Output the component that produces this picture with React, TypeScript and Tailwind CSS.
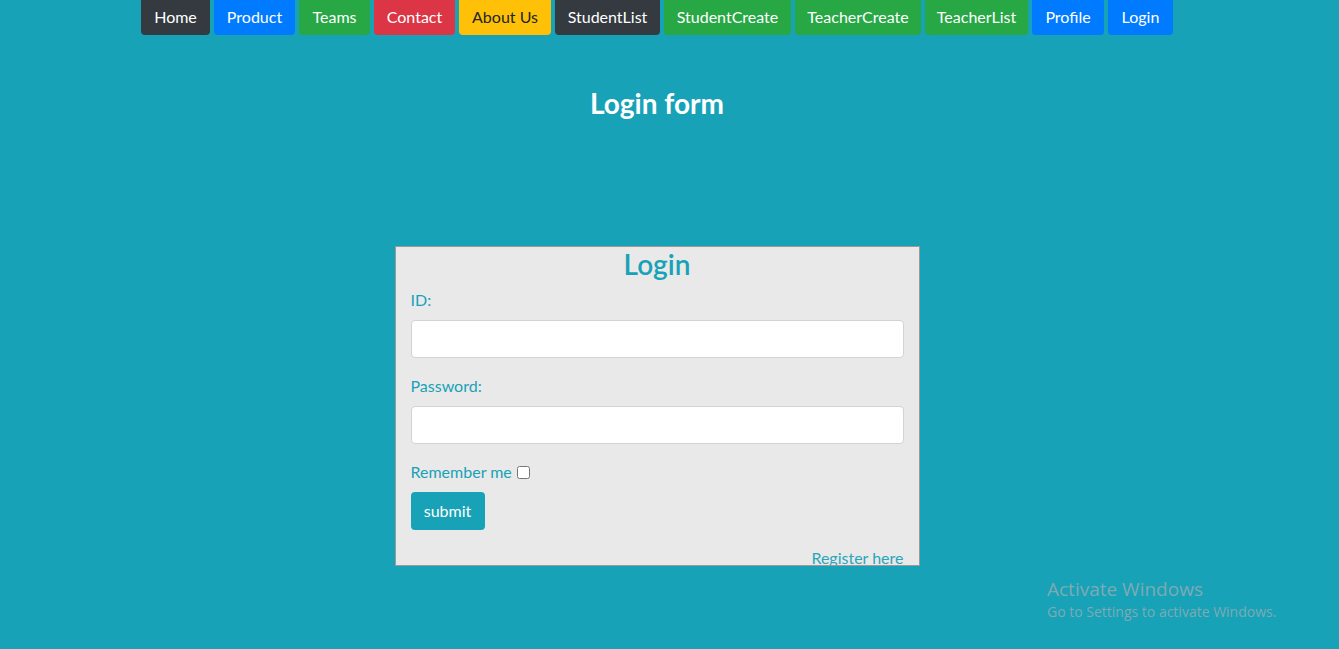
import React from "react";

const navItems: { label: string; cls: string }[] = [
  { label: "Home", cls: "w-[69px] bg-[#343a40] text-white" },
  { label: "Product", cls: "w-[81px] bg-[#007bff] text-white" },
  { label: "Teams", cls: "w-[71px] bg-[#28a745] text-white" },
  { label: "Contact", cls: "w-[81px] bg-[#dc3545] text-white" },
  { label: "About Us", cls: "w-[92px] bg-[#ffc107] text-[#212529]" },
  { label: "StudentList", cls: "w-[105px] bg-[#343a40] text-white" },
  { label: "StudentCreate", cls: "w-[127px] bg-[#28a745] text-white" },
  { label: "TeacherCreate", cls: "w-[126px] bg-[#28a745] text-white" },
  { label: "TeacherList", cls: "w-[103px] bg-[#28a745] text-white" },
  { label: "Profile", cls: "w-[72px] bg-[#007bff] text-white" },
  { label: "Login", cls: "w-[65px] bg-[#007bff] text-white" },
];

export default function App() {
  return (
    <div
      className="relative min-h-[649px] w-full overflow-hidden bg-[#17a2b8]"
      style={{ fontFamily: "Lato, 'Open Sans', sans-serif" }}
    >
      <div className="w-[1314px]">
        <nav className="flex justify-center gap-[4px]">
          {navItems.map((n) => (
            <button
              key={n.label}
              className={`${n.cls} flex h-[35px] items-center justify-center rounded-b-[4px] pb-[1px] text-[16px] leading-6`}
            >
              {n.label}
            </button>
          ))}
        </nav>
        <h3 className="mt-[51px] text-center text-[28px] font-bold leading-[34px] text-white">
          Login form
        </h3>
        <div className="mt-[126px] flex justify-center">
          <div className="h-[320px] w-[525px] overflow-hidden border border-[#9a9a9a] bg-[#e9e9e9] px-[15px]">
            <h2 className="text-center text-[28px] font-semibold leading-[34px] text-[#17a2b8]">
              Login
            </h2>
            <div className="mt-[7px]">
              <label className="block text-[16px] leading-6 text-[#17a2b8]">ID:</label>
              <input
                type="text"
                className="mt-[8px] block h-[38px] w-full rounded-[4px] border border-[#ced4da] bg-white px-3"
              />
            </div>
            <div className="mt-[16px]">
              <label className="block text-[16px] leading-6 text-[#17a2b8]">Password:</label>
              <input
                type="password"
                className="mt-[8px] block h-[38px] w-full rounded-[4px] border border-[#ced4da] bg-white px-3"
              />
            </div>
            <div className="mt-[16px] flex items-center text-[16px] leading-6 text-[#17a2b8]">
              <span>Remember me</span>
              <input type="checkbox" className="ml-[5px] h-[13px] w-[13px]" />
            </div>
            <button className="mt-[8px] h-[38px] w-[74px] rounded-[4px] bg-[#17a2b8] text-[16px] text-white">
              submit
            </button>
            <div className="mt-[16px] text-right text-[16px] leading-6 text-[#2aa6bb]">
              Register here
            </div>
          </div>
        </div>
      </div>
      <div
        className="absolute left-[1047px] top-[577px] text-[#7eaab3]"
        style={{ fontFamily: "'Open Sans', sans-serif" }}
      >
        <div className="text-[19px] leading-[25px]">Activate Windows</div>
        <div className="text-[14px] leading-[19px]">Go to Settings to activate Windows.</div>
      </div>
    </div>
  );
}
